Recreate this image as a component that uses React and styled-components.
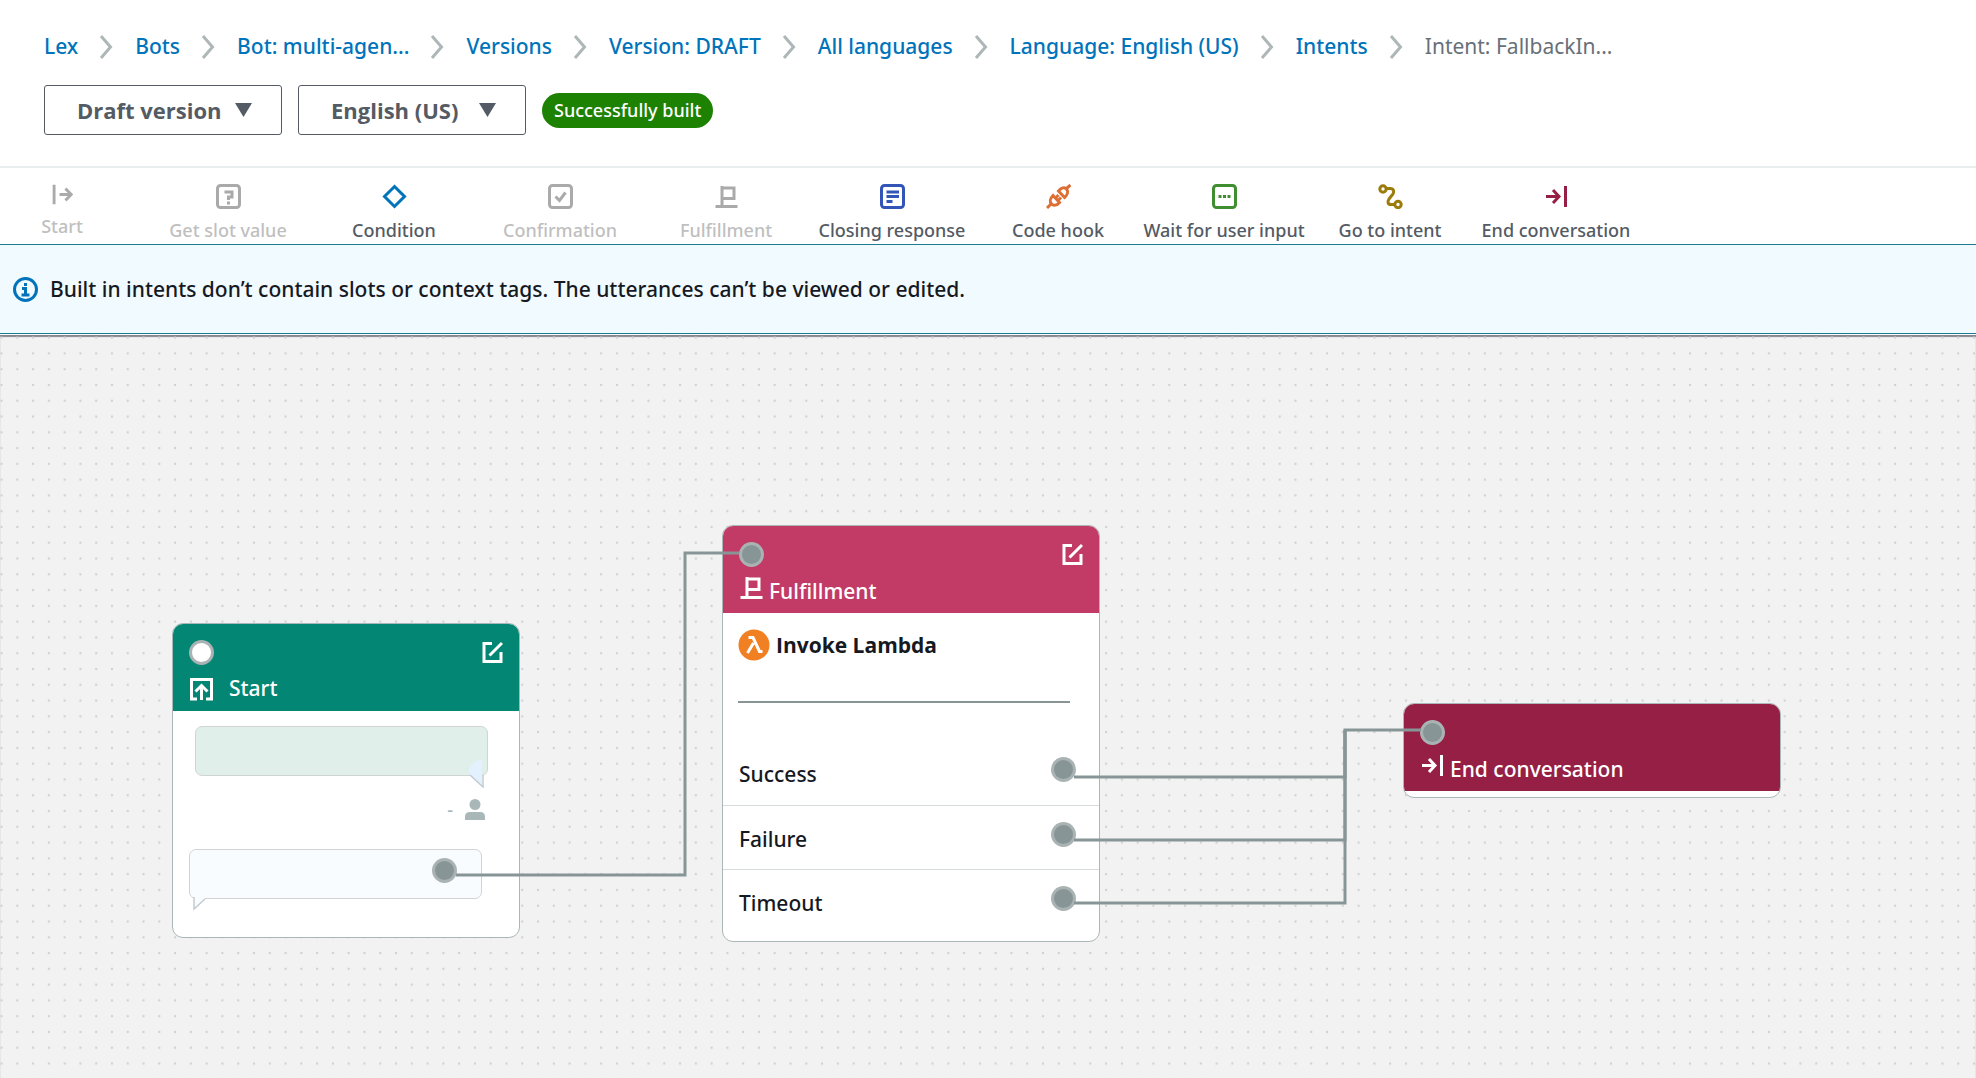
import React from 'react';
import styled, { createGlobalStyle } from 'styled-components';

const GlobalStyle = createGlobalStyle`
  * {
    box-sizing: border-box;
  }
  body {
    margin: 0;
    background: #fff;
    color: #16191f;
    font-family: 'Noto Sans', 'Open Sans', sans-serif;
  }
`;

const Page = styled.div`
  display: flex;
  flex-direction: column;
  min-height: 100vh;
`;

const Header = styled.header`
  display: flex;
  flex-direction: column;
  gap: 24px;
  padding: 32px 44px 31px;
  border-bottom: 2px solid #eaeded;
`;

const Crumbs = styled.ol`
  display: flex;
  align-items: center;
  margin: 0;
  padding: 0;
  list-style: none;
  font-size: 21px;
  line-height: 29px;
`;

const Crumb = styled.li`
  display: flex;
  align-items: center;
  white-space: nowrap;
  color: #687078;

  a {
    color: #0073bb;
    text-decoration: none;
    font-weight: 500;
  }
  svg {
    margin: 0 22px 0 21px;
  }
`;

const Controls = styled.div`
  display: flex;
  align-items: center;
  gap: 16px;
`;

const Picker = styled.label`
  display: grid;
  align-items: center;

  > * {
    grid-area: 1 / 1;
  }
  svg {
    justify-self: end;
    margin-right: 30px;
    pointer-events: none;
  }
`;

const Select = styled.select`
  appearance: none;
  width: ${(props) => props.$width}px;
  height: 50px;
  padding: 0 32px;
  border: 1px solid #545b64;
  border-radius: 3px;
  background: #fff;
  color: #545b64;
  font: bold 22px 'Open Sans', sans-serif;
`;

const Badge = styled.span`
  padding: 0 12px;
  border-radius: 18px;
  background: #1d8102;
  color: #fff;
  font-size: 18px;
  font-weight: 500;
  line-height: 35px;
`;

const Toolbar = styled.div`
  display: flex;
  height: 76px;
  margin-left: -21px;
`;

const Tool = styled.button`
  display: flex;
  flex: 0 0 166px;
  flex-direction: column;
  align-items: center;
  gap: 8px;
  padding: 16px 0 0;
  border: 0;
  background: none;
  color: #545b64;
  font: 500 18px/26px 'Noto Sans', sans-serif;
  white-space: nowrap;

  &:disabled {
    color: #bfbfbf;
  }
`;

const Banner = styled.div`
  display: flex;
  align-items: center;
  gap: 12px;
  height: 90px;
  margin-bottom: 1px;
  padding: 0 13px;
  border: solid #1c7b92;
  border-width: 1px 0;
  background: #f1faff;
  font-size: 21px;
  font-weight: 500;
`;

const Canvas = styled.main`
  position: relative;
  flex: 1 0 640px;
  overflow: hidden;
  background: #f2f2f2;
  box-shadow: inset 0 2px 1px #86858f;
`;

const Backdrop = styled.svg`
  display: block;
  position: absolute;
  width: 100%;
  height: 100%;
  pointer-events: none;
`;

const Node = styled.section`
  position: absolute;
  left: ${(props) => props.$x}px;
  top: ${(props) => props.$y}px;
  width: ${(props) => props.$width}px;
  overflow: hidden;
  border: 1px solid #aab7b8;
  border-radius: 11px;
  background: #fff;
`;

const NodeHeader = styled.div`
  display: flex;
  flex-direction: column;
  gap: 8px;
  height: 88px;
  margin: -1px -1px 0;
  padding: 17px;
  background: ${(props) => props.$color};
  color: #fff;
`;

const NodeTop = styled.div`
  display: flex;
  align-items: center;
  justify-content: space-between;
`;

const NodeTitle = styled.h2`
  display: flex;
  align-items: center;
  gap: ${(props) => (props.$raised ? 5 : 15)}px;
  margin: 0;
  font-size: 21px;
  font-weight: 500;
  line-height: 30px;

  svg {
    margin-bottom: ${(props) => (props.$raised ? 6 : 0)}px;
  }
`;

const Port = styled.span`
  width: 25px;
  height: 25px;
  border: 3px solid #aab3b3;
  border-radius: 50%;
  background: ${(props) => (props.$open ? '#fff' : '#879596')};
`;

const EditButton = styled.button`
  display: flex;
  padding: 0;
  border: 0;
  background: none;
  color: inherit;
`;

const Conversation = styled.div`
  display: flex;
  flex-direction: column;
  height: 226px;
  padding: 15px 16px 0;
`;

const Speaker = styled.div`
  display: flex;
  align-items: center;
  justify-content: flex-end;
  gap: 12px;
  height: 26px;
  margin: 8px 18px 27px 0;
  color: #aab7b8;
  font-size: 18px;
  font-weight: 500;
`;

const Bubble = styled.div`
  display: flex;
  flex-direction: column;
  align-items: ${(props) => (props.$user ? 'flex-end' : 'flex-start')};
  width: 293px;
  height: 62px;
  margin-left: ${(props) => (props.$user ? 6 : 0)}px;
`;

const BubbleBody = styled.div`
  display: flex;
  align-items: flex-start;
  justify-content: flex-end;
  width: 100%;
  height: 50px;
  padding: 8px 24px;
  border: 1px solid #d0d4d4;
  border-radius: 7px;
  background: ${(props) => (props.$user ? '#e0efea' : '#f8fcff')};
`;

const Tail = styled.svg`
  margin: ${(props) => (props.$user ? '-18px 4px 0 0' : '-2px 0 0 4px')};
`;

const Action = styled.div`
  display: flex;
  align-items: center;
  gap: 6px;
  height: 90px;
  margin: 0 29px 0 15px;
  padding-bottom: 24px;
  border-bottom: 2px solid #879596;
  font: bold 21px 'Open Sans', sans-serif;
`;

const Outcomes = styled.ul`
  margin: 0;
  padding: 38px 0 8px;
  list-style: none;
`;

const Outcome = styled.li`
  display: flex;
  align-items: flex-start;
  justify-content: space-between;
  height: 64px;
  padding: 16px 23px 0 16px;
  font-size: 21px;
  font-weight: 500;
  line-height: 34px;

  & + & {
    border-top: 1px solid #d5dbdb;
  }
`;

const Chevron = () => (
  <svg width="14" height="24" fill="none" stroke="#aeb6b8" strokeWidth="3" aria-hidden="true">
    <path d="M2 1l9.500 11L2 23" />
  </svg>
);

const Caret = () => (
  <svg width="17" height="14" fill="#545b64" aria-hidden="true">
    <path d="M0 0h17L8.500 14z" />
  </svg>
);

const icons = {
  start: (
    <g strokeWidth="3.400">
      <path d="M2.500 1v23M9 12.500h14" />
      <path d="M16 5.500l7 7-7 7" />
    </g>
  ),
  slot: (
    <>
      <rect x="1.500" y="1.500" width="22" height="22" rx="3" />
      <path d="M8.500 8h7.500v5h-3.500v3M12.500 17.500v3" />
    </>
  ),
  condition: <path d="M12.500 2.500l10 10-10 10-10-10z" />,
  confirmation: (
    <>
      <rect x="1.500" y="1.500" width="22" height="22" rx="3" />
      <path d="M7.500 12.500l4 4 6-8" />
    </>
  ),
  fulfillment: <path d="M1.500 22.500h22M8 2v20M8 4h12v10.500H8" />,
  closing: (
    <>
      <rect x="1.500" y="1.500" width="22" height="22" rx="3" />
      <path d="M6.500 8h12.500M6.500 12.500h12.500M6.500 17.500h6" />
    </>
  ),
  hook: (
    <>
      <path d="M1 24l4-4M20.500 4.500L24.500 1" />
      <path d="M7 11.500l6.500 7c-2.500 3-6 3.500-8 1.500s-1.500-5.500 1.500-8.500z" />
      <path d="M12.500 7l6 6.500c3-2.500 4-6 2-8.500s-5.500-1-8 2z" />
      <path d="M9.500 14l3-3M12 16.500l3-3" />
    </>
  ),
  wait: (
    <>
      <rect x="1.500" y="1.500" width="22" height="22" rx="3" />
      <path d="M6.500 12.500h3M11 12.500h3M15.500 12.500h3" />
    </>
  ),
  goto: (
    <>
      <circle cx="5" cy="5" r="3.200" />
      <circle cx="20" cy="20.500" r="3.200" />
      <path d="M8.500 4.500h4c3 0 4 3 2.500 5.500l-4 5c-2 3-1 5.500 2 5.500h3.500" />
    </>
  ),
  end: (
    <>
      <path d="M21.500 2v21M2 12.500h12" />
      <path d="M9 6l6 6.500L9 19" />
    </>
  ),
  enter: (
    <>
      <path d="M8 23H2.500V3.500h20V23H17" />
      <path d="M12.500 24V10M6.500 15.500l6-6 6 6" />
    </>
  ),
};

const Icon = ({ name, color, size = 25 }) => (
  <svg
    width={size}
    height={size}
    viewBox="0 0 25 25"
    fill="none"
    stroke={color || 'currentColor'}
    strokeWidth="3"
    aria-hidden="true"
  >
    {icons[name]}
  </svg>
);

const Edit = () => (
  <EditButton type="button" aria-label="Edit">
    <svg width="21" height="23" fill="none" stroke="currentColor" strokeWidth="3" aria-hidden="true">
      <path d="M10 2.500H2v18h17V11M7.500 14.500L20 2" />
    </svg>
  </EditButton>
);

const crumbs = [
  'Lex',
  'Bots',
  'Bot: multi-agen...',
  'Versions',
  'Version: DRAFT',
  'All languages',
  'Language: English (US)',
  'Intents',
];

const tools = [
  { icon: 'start', label: 'Start', size: 21, disabled: true },
  { icon: 'slot', label: 'Get slot value', disabled: true },
  { icon: 'condition', label: 'Condition', color: '#0073bb' },
  { icon: 'confirmation', label: 'Confirmation', disabled: true },
  { icon: 'fulfillment', label: 'Fulfillment', disabled: true },
  { icon: 'closing', label: 'Closing response', color: '#3355b8' },
  { icon: 'hook', label: 'Code hook', color: '#dd6f35' },
  { icon: 'wait', label: 'Wait for user input', color: '#3f8f30' },
  { icon: 'goto', label: 'Go to intent', color: '#9c7b0b' },
  { icon: 'end', label: 'End conversation', color: '#961f46' },
];

const links = [
  'M456 540H685V218H739',
  'M1074 442H1345V395H1421',
  'M1074 505H1345V395',
  'M1074 568H1345V395',
];

const App = () => (
  <Page>
    <GlobalStyle />
    <Header>
      <nav aria-label="Breadcrumbs">
        <Crumbs>
          {crumbs.map((text) => (
            <Crumb key={text}>
              <a href="#top">{text}</a>
              <Chevron />
            </Crumb>
          ))}
          <Crumb aria-current="page">Intent: FallbackIn...</Crumb>
        </Crumbs>
      </nav>
      <Controls>
        <Picker>
          <Select $width={238} aria-label="Version">
            <option>Draft version</option>
          </Select>
          <Caret />
        </Picker>
        <Picker>
          <Select $width={228} aria-label="Language">
            <option>English (US)</option>
          </Select>
          <Caret />
        </Picker>
        <Badge>Successfully built</Badge>
      </Controls>
    </Header>
    <Toolbar>
      {tools.map(({ icon, label, color, size, disabled }) => (
        <Tool key={icon} type="button" disabled={disabled}>
          <Icon name={icon} size={size} color={disabled ? '#aaa' : color} />
          {label}
        </Tool>
      ))}
    </Toolbar>
    <Banner role="status">
      <svg width="25" height="25" fill="none" stroke="#0073bb" strokeWidth="3" aria-hidden="true">
        <circle cx="12.500" cy="12.500" r="11" />
        <path d="M12.500 6v3M9 11.500h3.500v6M8.500 18h8" />
      </svg>
      Built in intents don’t contain slots or context tags. The utterances can’t be viewed or edited.
    </Banner>
    <Canvas>
      <Backdrop aria-hidden="true">
        <defs>
          <pattern
            id="dots"
            x="-6.400"
            y="10.500"
            width="15.780"
            height="15.780"
            patternUnits="userSpaceOnUse"
          >
            <circle cx="7.900" cy="7.900" r="1.200" fill="#cfd2d4" />
          </pattern>
        </defs>
        <rect width="100%" height="100%" fill="url(#dots)" />
      </Backdrop>

      <Node $x={172} $y={288} $width={348}>
        <NodeHeader $color="#038674">
          <NodeTop>
            <Port $open />
            <Edit />
          </NodeTop>
          <NodeTitle>
            <Icon name="enter" />
            Start
          </NodeTitle>
        </NodeHeader>
        <Conversation>
          <Bubble $user>
            <BubbleBody $user />
            <Tail $user width="16" height="30" aria-hidden="true">
              <path d="M1 12Q3 4 14 1V28L2 17z" fill="#e2f1fd" />
              <path d="M2 17L15 29V17" fill="none" stroke="#c3cbd0" strokeWidth="1.500" />
            </Tail>
          </Bubble>
          <Speaker>
            -
            <svg width="20" height="21" fill="#aab7b8" role="img" aria-label="User">
              <circle cx="10" cy="5.500" r="5.500" />
              <path d="M0 21v-3q0-5 5-5h10q5 0 5 5v3z" />
            </svg>
          </Speaker>
          <Bubble>
            <BubbleBody>
              <Port />
            </BubbleBody>
            <Tail width="14" height="14" aria-hidden="true">
              <path d="M1 0v12L12 2V0z" fill="#f8fcff" />
              <path d="M1 0v12L12 2" fill="none" stroke="#c3cbd0" strokeWidth="1.500" />
            </Tail>
          </Bubble>
        </Conversation>
      </Node>

      <Node $x={722} $y={190} $width={378}>
        <NodeHeader $color="#c23b66">
          <NodeTop>
            <Port />
            <Edit />
          </NodeTop>
          <NodeTitle $raised>
            <Icon name="fulfillment" />
            Fulfillment
          </NodeTitle>
        </NodeHeader>
        <Action>
          <svg width="32" height="32" aria-hidden="true">
            <circle cx="16" cy="16" r="15.500" fill="#f08021" />
            <path
              d="M10.500 8.500h4.500l6.500 14h3M15.500 14L9.500 24"
              fill="none"
              stroke="#fff"
              strokeWidth="3"
            />
          </svg>
          Invoke Lambda
        </Action>
        <Outcomes>
          {['Success', 'Failure', 'Timeout'].map((name) => (
            <Outcome key={name}>
              {name}
              <Port />
            </Outcome>
          ))}
        </Outcomes>
      </Node>

      <Node $x={1403} $y={368} $width={378}>
        <NodeHeader $color="#961f46">
          <NodeTop>
            <Port />
          </NodeTop>
          <NodeTitle $raised>
            <Icon name="end" />
            End conversation
          </NodeTitle>
        </NodeHeader>
        <svg width="1" height="6" display="block" aria-hidden="true" />
      </Node>

      <Backdrop aria-hidden="true">
        {links.map((d) => (
          <path key={d} d={d} fill="none" stroke="#879596" strokeWidth="3" />
        ))}
      </Backdrop>
    </Canvas>
  </Page>
);

export default App;
